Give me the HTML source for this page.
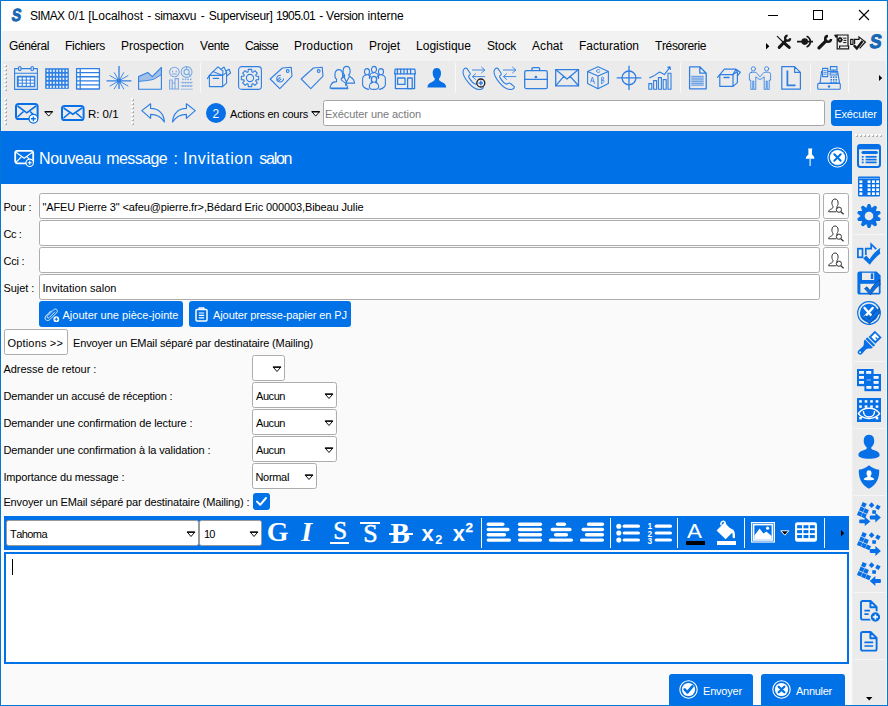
<!DOCTYPE html><html><head><meta charset="utf-8"><title>SIMAX</title><style>html,body{margin:0;padding:0}body{width:888px;height:706px;position:relative;overflow:hidden;background:#fafafa;font-family:'Liberation Sans',sans-serif;font-kerning:none}svg{overflow:visible;display:block}.in{position:absolute;box-sizing:border-box;background:#fff;border:1px solid #adadad;border-radius:2.5px}.bb{position:absolute;background:#0071e6;border-radius:3px}.sep{position:absolute;background:#fff;width:1px}.hs{position:absolute;background:#f6f6f6;height:1px;left:854px;width:31px}</style></head><body>
<div style="position:absolute;left:0px;top:0px;width:888px;height:31px;background:#fff"></div>
<div style="position:absolute;left:0px;top:31px;width:888px;height:30px;background:#f2f2f2"></div>
<div style="position:absolute;left:0px;top:61px;width:888px;height:70px;background:#ebebeb"></div>
<div style="position:absolute;left:1px;top:131px;width:851px;height:53px;background:#0071e6"></div>
<div style="position:absolute;left:852px;top:131px;width:34px;height:574px;background:#ebebeb"></div>
<div style="position:absolute;left:852px;top:131px;width:1px;height:574px;background:#efefef"></div>
<div style="position:absolute;left:886px;top:1px;width:1px;height:704px;background:#fbf6f0"></div>
<div style="position:absolute;left:1px;top:31px;width:1px;height:100px;background:#fbfbfb"></div>
<div style="position:absolute;left:1px;top:184px;width:1px;height:521px;background:#fff"></div>
<div style="position:absolute;left:0px;top:0px;width:888px;height:1px;background:#0078d7"></div>
<div style="position:absolute;left:0px;top:705px;width:888px;height:1px;background:#0078d7"></div>
<div style="position:absolute;left:0px;top:0px;width:1px;height:706px;background:#0078d7"></div>
<div style="position:absolute;left:887px;top:0px;width:1px;height:706px;background:#0078d7"></div>
<span style="position:absolute;left:10.2px;top:1.8px;font:bold 17.6px/26px 'Liberation Sans',sans-serif;-webkit-text-stroke:0.9px #1566b4;color:#1566b4;transform:skewX(-9deg) scaleX(0.8);transform-origin:0 100%">S</span><svg style="position:absolute;left:760px;top:5px" width="120" height="20" viewBox="0 0 120 20"><g fill="none" stroke="#000" stroke-width="1"><path d="M8 10.5 H18"/><rect x="53.5" y="5.5" width="9" height="9"/><path d="M99 5 L109 15 M109 5 L99 15" stroke-width="1.1"/></g></svg>
<svg style="position:absolute;left:766px;top:43px" width="4" height="7" viewBox="0 0 4 7"><path d="M0 0 L3.4 3.2 L0 6.4 Z" fill="#000"/></svg><svg style="position:absolute;left:777px;top:35px" width="14" height="14" viewBox="0 0 14 14"><g stroke="#161616" fill="none"><path d="M0.3 1.3 L6 7" stroke-width="1.1" stroke-linecap="round"/><path d="M7 7.8 L12.2 12.4" stroke-width="3.1" stroke-linecap="round"/><path d="M2.2 12.4 L8.6 5.8" stroke-width="3" stroke-linecap="round"/><path d="M13.1 3.2 A2.5 2.5 0 1 1 10.6 0.7" stroke-width="2.3"/></g></svg><svg style="position:absolute;left:797px;top:35px" width="17" height="14" viewBox="0 0 17 14"><circle cx="7.7" cy="6.6" r="3.3" fill="#161616"/><path d="M0 6.6 H5 M10.6 6.6 H16" stroke="#161616" stroke-width="1.7"/><path d="M9.6 1.2 A5.8 5.8 0 0 1 9.6 12" fill="none" stroke="#161616" stroke-width="1.7"/></svg><svg style="position:absolute;left:817px;top:35px" width="15" height="15" viewBox="0 0 15 15"><g stroke="#161616" fill="none"><path d="M2 12.8 L9 5.8" stroke-width="3.3" stroke-linecap="round"/><path d="M14 4 A2.9 2.9 0 1 1 11 1" stroke-width="2.5"/></g></svg><svg style="position:absolute;left:833.5px;top:34px" width="15" height="16" viewBox="0 0 15 16"><g fill="none" stroke="#161616" stroke-width="1.2"><path d="M3 1 H14 V12 M3.2 3.2 V14.8 H14.6 V12 H5.6 V14"/><path d="M0.6 1 H3.4 V3.2 H1.6 Z" fill="#161616" stroke-width="0.8"/><path d="M9.2 4.2 H12.4 M9.6 6.4 H12.4 M9.2 8.6 H12.4" stroke-width="1"/><circle cx="6" cy="5.8" r="1.6" stroke-width="1.7"/><path d="M6 2.8 V3.8 M6 7.8 V8.8 M3 5.8 H4 M8 5.8 H9 M3.9 3.7 L4.6 4.4 M7.4 7.2 L8.1 7.9 M8.1 3.7 L7.4 4.4 M4.6 7.2 L3.9 7.9" stroke-width="0.9"/></g></svg><svg style="position:absolute;left:850px;top:36px" width="16" height="14" viewBox="0 0 16 14"><g fill="none" stroke="#161616" stroke-width="1.2" stroke-linejoin="miter"><rect x="0.7" y="3.4" width="2.3" height="5"/><path d="M4.6 8 V3.4 H9 V0.9 L15.4 6 L9.6 12.4"/><path d="M3.8 9.2 L6.8 12.4 L12.6 5" stroke-width="2.4"/></g></svg><span style="position:absolute;left:868.2px;top:28.2px;font:bold 19.4px/26px 'Liberation Sans',sans-serif;-webkit-text-stroke:1px #1566b4;color:#1566b4;transform:skewX(-9deg) scaleX(0.9);transform-origin:0 100%">S</span>
<svg style="position:absolute;left:4px;top:64px" width="3" height="28" viewBox="0 0 3 28"><rect x="0" y="0" width="2" height="2" fill="#fff"/><path d="M3 0.8 V3 H1 Z" fill="#999"/><rect x="2" y="2" width="1" height="1" fill="#aaa"/><rect x="0" y="4" width="2" height="2" fill="#fff"/><path d="M3 4.8 V7 H1 Z" fill="#999"/><rect x="2" y="6" width="1" height="1" fill="#aaa"/><rect x="0" y="8" width="2" height="2" fill="#fff"/><path d="M3 8.8 V11 H1 Z" fill="#999"/><rect x="2" y="10" width="1" height="1" fill="#aaa"/><rect x="0" y="12" width="2" height="2" fill="#fff"/><path d="M3 12.8 V15 H1 Z" fill="#999"/><rect x="2" y="14" width="1" height="1" fill="#aaa"/><rect x="0" y="16" width="2" height="2" fill="#fff"/><path d="M3 16.8 V19 H1 Z" fill="#999"/><rect x="2" y="18" width="1" height="1" fill="#aaa"/><rect x="0" y="20" width="2" height="2" fill="#fff"/><path d="M3 20.8 V23 H1 Z" fill="#999"/><rect x="2" y="22" width="1" height="1" fill="#aaa"/><rect x="0" y="24" width="2" height="2" fill="#fff"/><path d="M3 24.8 V27 H1 Z" fill="#999"/><rect x="2" y="26" width="1" height="1" fill="#aaa"/></svg><div style="position:absolute;left:200px;top:63px;width:1px;height:30px;background:#f9f9f9"></div><div style="position:absolute;left:455px;top:63px;width:1px;height:30px;background:#f9f9f9"></div><div style="position:absolute;left:680px;top:63px;width:1px;height:30px;background:#f9f9f9"></div><div style="position:absolute;left:810px;top:63px;width:1px;height:30px;background:#f9f9f9"></div><div style="position:absolute;left:848px;top:63px;width:1px;height:30px;background:#f9f9f9"></div><svg style="position:absolute;left:14px;top:66px" width="24" height="24" viewBox="0 0 24 24"><g fill="none" stroke="#2f7fe3" stroke-width="1.1" stroke-linecap="round" stroke-linejoin="round" ><rect x="0.6" y="2.6" width="22.8" height="20.8"/><path d="M0.6 7.2 H23.4"/><rect x="3.4" y="10.4" width="17.4" height="10.4" fill="#2f7fe3"/><rect x="4.7" y="11.5" width="3" height="2.1" fill="#fff" stroke="none"/><rect x="4.7" y="14.6" width="3" height="2.1" fill="#fff" stroke="none"/><rect x="4.7" y="17.7" width="3" height="2.1" fill="#fff" stroke="none"/><rect x="8.75" y="11.5" width="3" height="2.1" fill="#fff" stroke="none"/><rect x="8.75" y="14.6" width="3" height="2.1" fill="#fff" stroke="none"/><rect x="8.75" y="17.7" width="3" height="2.1" fill="#fff" stroke="none"/><rect x="12.8" y="11.5" width="3" height="2.1" fill="#fff" stroke="none"/><rect x="12.8" y="14.6" width="3" height="2.1" fill="#fff" stroke="none"/><rect x="12.8" y="17.7" width="3" height="2.1" fill="#fff" stroke="none"/><rect x="16.85" y="11.5" width="3" height="2.1" fill="#fff" stroke="none"/><rect x="16.85" y="14.6" width="3" height="2.1" fill="#fff" stroke="none"/><rect x="16.85" y="17.7" width="3" height="2.1" fill="#fff" stroke="none"/><rect x="4.6" y="0.5" width="2.4" height="4.2" rx="1.2" fill="#ebebeb"/><rect x="17" y="0.5" width="2.4" height="4.2" rx="1.2" fill="#ebebeb"/></g></svg><svg style="position:absolute;left:45px;top:66px" width="24" height="24" viewBox="0 0 24 24"><rect x="0.2" y="2.2" width="23.6" height="20.6" fill="#2f7fe3"/><rect x="1.7" y="3.7" width="1.7" height="2.2" fill="#fff" fill-opacity="0.9"/><rect x="1.7" y="7.7" width="1.7" height="2.2" fill="#fff" fill-opacity="0.9"/><rect x="1.7" y="11.7" width="1.7" height="2.2" fill="#fff" fill-opacity="0.9"/><rect x="1.7" y="15.7" width="1.7" height="2.2" fill="#fff" fill-opacity="0.9"/><rect x="1.7" y="19.7" width="1.7" height="2.2" fill="#fff" fill-opacity="0.9"/><rect x="4.88" y="3.7" width="1.7" height="2.2" fill="#fff" fill-opacity="0.9"/><rect x="4.88" y="7.7" width="1.7" height="2.2" fill="#fff" fill-opacity="0.9"/><rect x="4.88" y="11.7" width="1.7" height="2.2" fill="#fff" fill-opacity="0.9"/><rect x="4.88" y="15.7" width="1.7" height="2.2" fill="#fff" fill-opacity="0.9"/><rect x="4.88" y="19.7" width="1.7" height="2.2" fill="#fff" fill-opacity="0.9"/><rect x="8.06" y="3.7" width="1.7" height="2.2" fill="#fff" fill-opacity="0.9"/><rect x="8.06" y="7.7" width="1.7" height="2.2" fill="#fff" fill-opacity="0.9"/><rect x="8.06" y="11.7" width="1.7" height="2.2" fill="#fff" fill-opacity="0.9"/><rect x="8.06" y="15.7" width="1.7" height="2.2" fill="#fff" fill-opacity="0.9"/><rect x="8.06" y="19.7" width="1.7" height="2.2" fill="#fff" fill-opacity="0.9"/><rect x="11.24" y="3.7" width="1.7" height="2.2" fill="#fff" fill-opacity="0.9"/><rect x="11.24" y="7.7" width="1.7" height="2.2" fill="#fff" fill-opacity="0.9"/><rect x="11.24" y="11.7" width="1.7" height="2.2" fill="#fff" fill-opacity="0.9"/><rect x="11.24" y="15.7" width="1.7" height="2.2" fill="#fff" fill-opacity="0.9"/><rect x="11.24" y="19.7" width="1.7" height="2.2" fill="#fff" fill-opacity="0.9"/><rect x="14.42" y="3.7" width="1.7" height="2.2" fill="#fff" fill-opacity="0.9"/><rect x="14.42" y="7.7" width="1.7" height="2.2" fill="#fff" fill-opacity="0.9"/><rect x="14.42" y="11.7" width="1.7" height="2.2" fill="#fff" fill-opacity="0.9"/><rect x="14.42" y="15.7" width="1.7" height="2.2" fill="#fff" fill-opacity="0.9"/><rect x="14.42" y="19.7" width="1.7" height="2.2" fill="#fff" fill-opacity="0.9"/><rect x="17.6" y="3.7" width="1.7" height="2.2" fill="#fff" fill-opacity="0.9"/><rect x="17.6" y="7.7" width="1.7" height="2.2" fill="#fff" fill-opacity="0.9"/><rect x="17.6" y="11.7" width="1.7" height="2.2" fill="#fff" fill-opacity="0.9"/><rect x="17.6" y="15.7" width="1.7" height="2.2" fill="#fff" fill-opacity="0.9"/><rect x="17.6" y="19.7" width="1.7" height="2.2" fill="#fff" fill-opacity="0.9"/><rect x="20.78" y="3.7" width="1.7" height="2.2" fill="#fff" fill-opacity="0.9"/><rect x="20.78" y="7.7" width="1.7" height="2.2" fill="#fff" fill-opacity="0.9"/><rect x="20.78" y="11.7" width="1.7" height="2.2" fill="#fff" fill-opacity="0.9"/><rect x="20.78" y="15.7" width="1.7" height="2.2" fill="#fff" fill-opacity="0.9"/><rect x="20.78" y="19.7" width="1.7" height="2.2" fill="#fff" fill-opacity="0.9"/></svg><svg style="position:absolute;left:76px;top:66px" width="24" height="24" viewBox="0 0 24 24"><g fill="none" stroke="#2f7fe3" stroke-width="1.3" stroke-linecap="round" stroke-linejoin="round" ><rect x="0.6" y="2.6" width="22.8" height="20.4" fill="#fff"/><path d="M0.6 6.68 H23.4"/><path d="M0.6 10.76 H23.4"/><path d="M0.6 14.84 H23.4"/><path d="M0.6 18.92 H23.4"/><path d="M4.2 2.6 V23"/></g></svg><svg style="position:absolute;left:107px;top:66px" width="24" height="24" viewBox="0 0 24 24"><g fill="none" stroke="#2f7fe3" stroke-width="1.1" stroke-linecap="round" stroke-linejoin="round" ><path d="M12 0.4 V22.4 M0 14.8 H24" stroke-width="1.3"/><g stroke-width="0.9"><path d="M12 14.8 L21.01 20.00"/><path d="M12 14.8 L16.70 22.94"/><path d="M12 14.8 L7.30 22.94"/><path d="M12 14.8 L2.99 20.00"/><path d="M12 14.8 L2.99 9.60"/><path d="M12 14.8 L7.30 6.66"/><path d="M12 14.8 L16.70 6.66"/><path d="M12 14.8 L21.01 9.60"/></g><circle cx="12" cy="14.8" r="1.7" fill="#2f7fe3"/></g></svg><svg style="position:absolute;left:138px;top:66px" width="24" height="24" viewBox="0 0 24 24"><g fill="none" stroke="#2f7fe3" stroke-width="1.1" stroke-linecap="round" stroke-linejoin="round" ><path d="M0.6 10.6 L9.8 6.4 L14.2 10.6 L23.4 1.4 V8.6 L15.6 13.4 L9 14.6 L0.6 15.4 Z" fill="#2f7fe3" fill-opacity="0.4" stroke="none"/><path d="M0.6 10.6 L9.8 6.4 L14.2 10.6 L23.4 1.4 V23.2 H0.6 Z"/><path d="M0.6 15.4 L9 14.6 L15.6 13.4 L23.4 8.6" stroke-width="0.9"/></g></svg><svg style="position:absolute;left:169px;top:66px" width="24" height="24" viewBox="0 0 24 24"><g fill="none" stroke="#2f7fe3" stroke-width="1.1" stroke-linecap="round" stroke-linejoin="round" opacity="0.6"><circle cx="5.4" cy="6" r="4.8"/><path d="M3.6 5 v1 M7.2 5 v1 M3.4 8 h4"/><circle cx="17.6" cy="6" r="5.4"/><circle cx="17.6" cy="6" r="2.6"/><path d="M17.6 0.6 V3.4 M19.6 7.8 L21.6 9.8"/><path d="M0.6 23 V14 H3.2 V23 M3.2 23 V17 H6 V23 M6 23 V12.6 H9.4 V23 M0.6 23 H9.8"/><path d="M12 23.2 H23.4 M12 19.8 H23.4 M12 16.4 H23.4" stroke-width="0.7"/><rect x="13.2" y="12.6" width="1.5" height="1.5" fill="#2f7fe3" stroke="none"/><rect x="13.2" y="16" width="1.5" height="1.5" fill="#2f7fe3" stroke="none"/><rect x="13.2" y="19.4" width="1.5" height="1.5" fill="#2f7fe3" stroke="none"/><rect x="15.8" y="12.6" width="1.5" height="1.5" fill="#2f7fe3" stroke="none"/><rect x="15.8" y="16" width="1.5" height="1.5" fill="#2f7fe3" stroke="none"/><rect x="15.8" y="19.4" width="1.5" height="1.5" fill="#2f7fe3" stroke="none"/><rect x="18.4" y="12.6" width="1.5" height="1.5" fill="#2f7fe3" stroke="none"/><rect x="18.4" y="16" width="1.5" height="1.5" fill="#2f7fe3" stroke="none"/><rect x="18.4" y="19.4" width="1.5" height="1.5" fill="#2f7fe3" stroke="none"/><rect x="21" y="12.6" width="1.5" height="1.5" fill="#2f7fe3" stroke="none"/><rect x="21" y="16" width="1.5" height="1.5" fill="#2f7fe3" stroke="none"/><rect x="21" y="19.4" width="1.5" height="1.5" fill="#2f7fe3" stroke="none"/></g></svg><svg style="position:absolute;left:207px;top:66px" width="24" height="24" viewBox="0 0 24 24"><g fill="none" stroke="#2f7fe3" stroke-width="1.1" stroke-linecap="round" stroke-linejoin="round" ><path d="M2.4 9.4 H15.6 V20.6 H2.4 Z"/><path d="M15.6 9.4 L19.6 6.4 V17.2 L15.6 20.6"/><path d="M2.4 9.4 L0.4 12.6 M2.4 9.4 L6 5.6 L15.6 9.4"/><path d="M6 5.6 L11 0.8 L16 5 L15.6 9.4 M14 3.4 L17 1 L19.6 6.4"/><path d="M19 5 L22 3.2 L23.6 7 L19.6 10"/><path d="M6.4 12.4 H11.4" stroke-width="1.4"/></g></svg><svg style="position:absolute;left:238px;top:66px" width="24" height="24" viewBox="0 0 24 24"><g fill="none" stroke="#2f7fe3" stroke-width="1.1" stroke-linecap="round" stroke-linejoin="round" ><rect x="0.6" y="0.6" width="22.8" height="22.8" rx="3.2"/><path d="M10.08 5.89 L10.30 3.37 L13.70 3.37 L13.92 5.89 L14.96 6.33 L16.90 4.69 L19.31 7.10 L17.67 9.04 L18.11 10.08 L20.63 10.30 L20.63 13.70 L18.11 13.92 L17.67 14.96 L19.31 16.90 L16.90 19.31 L14.96 17.67 L13.92 18.11 L13.70 20.63 L10.30 20.63 L10.08 18.11 L9.04 17.67 L7.10 19.31 L4.69 16.90 L6.33 14.96 L5.89 13.92 L3.37 13.70 L3.37 10.30 L5.89 10.08 L6.33 9.04 L4.69 7.10 L7.10 4.69 L9.04 6.33 Z"/><circle cx="12" cy="12" r="3.6"/></g></svg><svg style="position:absolute;left:269px;top:66px" width="24" height="24" viewBox="0 0 24 24"><g fill="none" stroke="#2f7fe3" stroke-width="1.1" stroke-linecap="round" stroke-linejoin="round" ><path d="M1.2 13 L13.4 2 L22.2 1.2 L23 10.2 L10.8 22.6 Z"/><circle cx="18.7" cy="5" r="1.4"/><g transform="rotate(-40 11 12.6)"><path d="M13.6 10.4 A3.4 3.4 0 1 0 13.6 15 M7.4 11.8 H11.8 M7.4 13.6 H11.4" stroke-width="1"/></g></g></svg><svg style="position:absolute;left:300px;top:66px" width="24" height="24" viewBox="0 0 24 24"><g fill="none" stroke="#2f7fe3" stroke-width="1.1" stroke-linecap="round" stroke-linejoin="round" ><path d="M1.2 13 L13.4 2 L22.2 1.2 L23 10.2 L10.8 22.6 Z"/><circle cx="18.7" cy="5" r="1.4"/></g></svg><svg style="position:absolute;left:331px;top:66px" width="24" height="24" viewBox="0 0 24 24"><g fill="none" stroke="#2f7fe3" stroke-width="1.1" stroke-linecap="round" stroke-linejoin="round" ><path d="M13.53 9.05 C11.28 7.45 11.46 0.40 15.60 0.40 C19.74 0.40 19.92 7.45 17.67 9.05 C17.67 11.30 23.12 11.12 23.50 16.85 L23.50 17.13 L7.70 17.13 C7.70 16.85 8.08 11.12 13.53 11.30 C13.53 10.74 13.53 9.80 13.53 9.05 Z"/><path d="M5.51 13.17 C3.02 11.40 3.22 3.60 7.80 3.60 C12.38 3.60 12.58 11.40 10.09 13.17 C10.09 15.66 16.12 15.46 16.54 21.80 L16.54 22.11 L-0.94 22.11 C-0.94 21.80 -0.52 15.46 5.51 15.66 C5.51 15.04 5.51 14.00 5.51 13.17 Z" fill="#ebebeb"/><path d="M0.4 22.6 H16.8" stroke-width="1.3"/><path d="M12.4 9.6 L15.4 16 L14.6 19.4 M18.6 10.2 L15.4 16"/></g></svg><svg style="position:absolute;left:362px;top:66px" width="24" height="24" viewBox="0 0 24 24"><g fill="none" stroke="#2f7fe3" stroke-width="1.1" stroke-linecap="round" stroke-linejoin="round" ><ellipse cx="12" cy="3.5" rx="2.5" ry="3.1"/><path d="M10.8 6.8 C7.4 7.8 7.4 9.4 7.4 12.4 V11.4"/><path d="M13.2 6.8 C16.6 7.8 16.6 9.4 16.6 12.4 V11.4"/><ellipse cx="5" cy="5.7" rx="2.5" ry="3.1"/><path d="M3.8 9 C0.6 10 0.6 11.6 0.6 14.6 V18.6"/><path d="M6.2 9 C9.4 10 9.4 11.6 9.4 14.6 V18.6"/><ellipse cx="19" cy="5.7" rx="2.5" ry="3.1"/><path d="M17.8 9 C14.6 10 14.6 11.6 14.6 14.6 V18.6"/><path d="M20.2 9 C23.4 10 23.4 11.6 23.4 14.6 V18.6"/><path d="M0.6 18.6 C1 21.6 3.4 22.6 6.6 23.4 M23.4 18.6 C23 21.6 20.6 22.6 17.4 23.4"/><ellipse cx="12" cy="13.4" rx="2.5" ry="3" fill="#ebebeb"/><path d="M10.8 16.4 C7.4 17.4 7.4 19 7.4 21 C7.4 22.4 9.4 23.4 12 23.4 C14.6 23.4 16.6 22.4 16.6 21 C16.6 19 16.6 17.4 13.2 16.4" fill="#ebebeb"/></g></svg><svg style="position:absolute;left:393px;top:66px" width="24" height="24" viewBox="0 0 24 24"><g fill="none" stroke="#2f7fe3" stroke-width="1.3" stroke-linecap="round" stroke-linejoin="round" ><path d="M2.2 3.2 H21.8 L22.4 7.8 H1.6 Z"/><path d="M4.4 3.2 V7.8"/><path d="M7.7 3.2 V7.8"/><path d="M11 3.2 V7.8"/><path d="M14.3 3.2 V7.8"/><path d="M17.6 3.2 V7.8"/><path d="M2.4 7.8 V22.6 H21.6 V7.8"/><rect x="4.6" y="12" width="7.4" height="6.4"/><rect x="14.6" y="12" width="4.6" height="10.6"/></g></svg><svg style="position:absolute;left:424px;top:66px" width="24" height="24" viewBox="0 0 24 24"><path d="M12.8 2 C9.4 2 8.4 5 8.8 8 C9 10.4 10.2 12 10.8 12.6 C11 14.4 10 15.2 7.6 16.2 C5 17.2 3.4 18.6 3.4 21.6 H22.2 C22.2 18.6 20.6 17.2 18 16.2 C15.6 15.2 14.8 14.4 15 12.6 C15.8 12 16.8 10.2 17 8 C17.2 5 16.2 2 12.8 2 Z" fill="#0870e6"/></svg><svg style="position:absolute;left:462px;top:66px" width="24" height="24" viewBox="0 0 24 24"><g fill="none" stroke="#2f7fe3" stroke-width="1.1" stroke-linecap="round" stroke-linejoin="round" ><path d="M1.2 4.6 C2 2.4 4 1.4 5 2.6 L8 7 C8.6 8 8 9 7 9.6 C6.4 10 6.6 11 7.6 12.6 C9.4 15.4 11.6 17.4 13 18 C14 18.4 14.6 17.6 15.4 17.2 C16.2 16.8 17 17 17.8 17.8 L21 20.4 C22 21.4 20.6 23 18.6 23.4 C15 24 10 21 6.4 16.6 C2.6 12 0.4 7.4 1.2 4.6 Z"/><g stroke-width="0.9"><path d="M10.4 4 H22.6 M19.6 1.2 L22.8 4 L19.6 6.8"/><path d="M10.6 10.6 H22.8 M13.6 7.8 L10.4 10.6 L13.6 13.4"/></g></g><circle cx="18.8" cy="17" r="4" fill="#ebebeb" stroke="#222" stroke-width="1.3"/><path d="M16.6 17 H21 M18.8 14.8 V19.2" stroke="#2f7fe3" stroke-width="1.5"/></svg><svg style="position:absolute;left:493px;top:66px" width="24" height="24" viewBox="0 0 24 24"><g fill="none" stroke="#2f7fe3" stroke-width="1.1" stroke-linecap="round" stroke-linejoin="round" ><path d="M1.2 4.6 C2 2.4 4 1.4 5 2.6 L8 7 C8.6 8 8 9 7 9.6 C6.4 10 6.6 11 7.6 12.6 C9.4 15.4 11.6 17.4 13 18 C14 18.4 14.6 17.6 15.4 17.2 C16.2 16.8 17 17 17.8 17.8 L21 20.4 C22 21.4 20.6 23 18.6 23.4 C15 24 10 21 6.4 16.6 C2.6 12 0.4 7.4 1.2 4.6 Z"/><g stroke-width="0.9"><path d="M10.4 4 H22.6 M19.6 1.2 L22.8 4 L19.6 6.8"/><path d="M10.6 10.6 H22.8 M13.6 7.8 L10.4 10.6 L13.6 13.4"/></g></g></svg><svg style="position:absolute;left:524px;top:66px" width="24" height="24" viewBox="0 0 24 24"><g fill="none" stroke="#2f7fe3" stroke-width="1.3" stroke-linecap="round" stroke-linejoin="round" ><rect x="0.7" y="4.6" width="22.6" height="18" rx="1.6"/><path d="M0.7 13.4 H23.3"/><path d="M8 4.6 V2.6 Q8 1.6 9 1.6 H14.6 Q15.6 1.6 15.6 2.6 V4.6"/><circle cx="11.9" cy="11" r="0.7" fill="#2f7fe3"/></g></svg><svg style="position:absolute;left:555px;top:66px" width="24" height="24" viewBox="0 0 24 24"><g fill="none" stroke="#2f7fe3" stroke-width="1.3" stroke-linecap="round" stroke-linejoin="round" ><rect x="0.7" y="3.6" width="22.8" height="16.2"/><path d="M0.7 3.6 L12 13 L23.5 3.6 M0.7 19.8 L8.8 10.4 M23.5 19.8 L15.2 10.4"/></g></svg><svg style="position:absolute;left:586px;top:66px" width="24" height="24" viewBox="0 0 24 24"><g fill="none" stroke="#2f7fe3" stroke-width="1.1" stroke-linecap="round" stroke-linejoin="round" ><path d="M12 0.8 L22.4 5.4 V17.4 L12 22.8 L1.6 17.4 V5.4 Z M1.6 5.4 L12 10 L22.4 5.4 M12 10 V22.8"/><path d="M13.8 4 a2 1.4 0 1 0 0 2" stroke-width="0.8"/><path d="M4.8 16 L6.4 11 L8.6 17.6 M5.4 14.6 L7.6 15.6" stroke-width="0.8"/><path d="M15.6 17.6 V11.6 C18.4 10 18.4 13.4 15.8 14.4 C19 13.2 18.8 16.6 15.6 17.6" stroke-width="0.8"/></g></svg><svg style="position:absolute;left:617px;top:66px" width="24" height="24" viewBox="0 0 24 24"><g fill="none" stroke="#2f7fe3" stroke-width="1.3" stroke-linecap="round" stroke-linejoin="round" ><circle cx="12" cy="11.9" r="6.9"/><path d="M12 0.2 V23.6 M0.2 11.9 H23.8"/></g></svg><svg style="position:absolute;left:648px;top:66px" width="24" height="24" viewBox="0 0 24 24"><g fill="none" stroke="#2f7fe3" stroke-width="1.1" stroke-linecap="round" stroke-linejoin="round" ><rect x="0.8" y="17.6" width="3" height="5.6"/><rect x="5.6" y="14.6" width="3" height="8.6"/><rect x="10.4" y="11.6" width="3" height="11.6"/><rect x="15.2" y="13.6" width="3" height="9.6"/><rect x="20" y="7.2" width="3" height="16"/><path d="M1.6 11.8 L6.6 9.4 L11.6 6 L16.4 8.6 L21.6 1.6"/><path d="M19.6 1.2 L22 0.8 L22.4 3.4" fill="#2f7fe3"/></g></svg><svg style="position:absolute;left:686px;top:66px" width="24" height="24" viewBox="0 0 24 24"><g fill="none" stroke="#2f7fe3" stroke-width="1.1" stroke-linecap="round" stroke-linejoin="round" ><path d="M3.6 0.8 H13.8 L20.2 7.2 V22.8 H3.6 Z M13.8 0.8 V7.2 H20.2" stroke-width="1.3"/><rect x="5.4" y="9.6" width="12.2" height="10.6" fill="#2f7fe3" fill-opacity="0.15" stroke="none"/><g stroke-width="0.7"><path d="M5.6 10.4 H17.4"/><path d="M5.6 12.15 H17.4"/><path d="M5.6 13.9 H17.4"/><path d="M5.6 15.65 H17.4"/><path d="M5.6 17.4 H17.4"/><path d="M5.6 19.15 H17.4"/></g></g></svg><svg style="position:absolute;left:717px;top:66px" width="24" height="24" viewBox="0 0 24 24"><g fill="none" stroke="#2f7fe3" stroke-width="1.2" stroke-linecap="round" stroke-linejoin="round" ><path d="M2.8 8.6 H16 V20.4 H2.8 Z"/><path d="M16 8.6 L20.4 5.6 V16.6 L16 20.4"/><path d="M2.8 8.6 L0.6 11.4 M2.8 8.6 L7.4 3.2 H19 L16 8.6 M19 3.2 L23.4 6.2 L20.4 9.8"/><path d="M7 11.6 H12" stroke-width="1.5"/></g></svg><svg style="position:absolute;left:748px;top:66px" width="24" height="24" viewBox="0 0 24 24"><g fill="none" stroke="#2f7fe3" stroke-width="0.85" stroke-linecap="round" stroke-linejoin="round" ><circle cx="5.4" cy="2.8" r="2.1"/><circle cx="18.6" cy="2.8" r="2.1"/><path d="M3.6 6.2 H7 Q8.4 6.2 9.2 7.6 L11.6 10.6 H12.4 L14.8 7.6 Q15.6 6.2 17 6.2 H20.4 Q22.6 6.2 22.6 8.4 V14.2 H21.2 V23.4 H19.2 V15 H18.2 V23.4 H16.2 V10.8 L13 13.2 H11 L7.8 10.8 V23.4 H5.8 V15 H4.8 V23.4 H2.8 V14.2 H1.4 V8.4 Q1.4 6.2 3.6 6.2 Z"/></g></svg><svg style="position:absolute;left:779px;top:66px" width="24" height="24" viewBox="0 0 24 24"><g fill="none" stroke="#2f7fe3" stroke-width="1.1" stroke-linecap="round" stroke-linejoin="round" ><path d="M2.8 0.6 H15.6 L21.4 6.4 V23.2 H2.8 Z M15.6 0.6 V6.4 H21.4" stroke-width="1.2"/><path d="M8.4 4.6 V19.4 H16.6" stroke-width="1.8" stroke-linecap="butt" stroke-linejoin="miter"/></g></svg><svg style="position:absolute;left:817px;top:66px" width="24" height="24" viewBox="0 0 24 24"><g fill="none" stroke="#2f7fe3" stroke-width="1.1" stroke-linecap="round" stroke-linejoin="round" ><path d="M3 17.4 L4.6 5.4 H20.6 L22.6 17.4 Z"/><rect x="0.7" y="17.4" width="22.6" height="5.8" rx="1"/><rect x="13.4" y="0.6" width="6.6" height="3.4"/><path d="M16.6 4 V5.4"/><rect x="5.6" y="2.4" width="5.2" height="8.2" fill="#ebebeb"/><path d="M7 4.6 H9.4 M7 6.4 H9.4 M7 8.2 H9.4" stroke-width="0.8"/><rect x="13.2" y="6.8" width="6.8" height="2.2"/><rect x="13.4" y="10.4" width="1.6" height="1.6" fill="#2f7fe3" stroke="none"/><rect x="13.4" y="13" width="1.6" height="1.6" fill="#2f7fe3" stroke="none"/><rect x="13.4" y="15.6" width="1.6" height="1.6" fill="#2f7fe3" stroke="none"/><rect x="15.9" y="10.4" width="1.6" height="1.6" fill="#2f7fe3" stroke="none"/><rect x="15.9" y="13" width="1.6" height="1.6" fill="#2f7fe3" stroke="none"/><rect x="15.9" y="15.6" width="1.6" height="1.6" fill="#2f7fe3" stroke="none"/><rect x="18.4" y="10.4" width="1.6" height="1.6" fill="#2f7fe3" stroke="none"/><rect x="18.4" y="13" width="1.6" height="1.6" fill="#2f7fe3" stroke="none"/><rect x="18.4" y="15.6" width="1.6" height="1.6" fill="#2f7fe3" stroke="none"/><circle cx="12" cy="20.4" r="0.7" fill="#2f7fe3"/></g></svg><svg style="position:absolute;left:878.5px;top:75px" width="4" height="7" viewBox="0 0 4 7"><path d="M0 0 L3.2 3 L0 6 Z" fill="#000"/></svg>
<svg style="position:absolute;left:4px;top:98px" width="3" height="28" viewBox="0 0 3 28"><rect x="0" y="0" width="2" height="2" fill="#fff"/><path d="M3 0.8 V3 H1 Z" fill="#999"/><rect x="2" y="2" width="1" height="1" fill="#aaa"/><rect x="0" y="4" width="2" height="2" fill="#fff"/><path d="M3 4.8 V7 H1 Z" fill="#999"/><rect x="2" y="6" width="1" height="1" fill="#aaa"/><rect x="0" y="8" width="2" height="2" fill="#fff"/><path d="M3 8.8 V11 H1 Z" fill="#999"/><rect x="2" y="10" width="1" height="1" fill="#aaa"/><rect x="0" y="12" width="2" height="2" fill="#fff"/><path d="M3 12.8 V15 H1 Z" fill="#999"/><rect x="2" y="14" width="1" height="1" fill="#aaa"/><rect x="0" y="16" width="2" height="2" fill="#fff"/><path d="M3 16.8 V19 H1 Z" fill="#999"/><rect x="2" y="18" width="1" height="1" fill="#aaa"/><rect x="0" y="20" width="2" height="2" fill="#fff"/><path d="M3 20.8 V23 H1 Z" fill="#999"/><rect x="2" y="22" width="1" height="1" fill="#aaa"/><rect x="0" y="24" width="2" height="2" fill="#fff"/><path d="M3 24.8 V27 H1 Z" fill="#999"/><rect x="2" y="26" width="1" height="1" fill="#aaa"/></svg><svg style="position:absolute;left:131px;top:98px" width="3" height="28" viewBox="0 0 3 28"><rect x="0" y="0" width="2" height="2" fill="#fff"/><path d="M3 0.8 V3 H1 Z" fill="#999"/><rect x="2" y="2" width="1" height="1" fill="#aaa"/><rect x="0" y="4" width="2" height="2" fill="#fff"/><path d="M3 4.8 V7 H1 Z" fill="#999"/><rect x="2" y="6" width="1" height="1" fill="#aaa"/><rect x="0" y="8" width="2" height="2" fill="#fff"/><path d="M3 8.8 V11 H1 Z" fill="#999"/><rect x="2" y="10" width="1" height="1" fill="#aaa"/><rect x="0" y="12" width="2" height="2" fill="#fff"/><path d="M3 12.8 V15 H1 Z" fill="#999"/><rect x="2" y="14" width="1" height="1" fill="#aaa"/><rect x="0" y="16" width="2" height="2" fill="#fff"/><path d="M3 16.8 V19 H1 Z" fill="#999"/><rect x="2" y="18" width="1" height="1" fill="#aaa"/><rect x="0" y="20" width="2" height="2" fill="#fff"/><path d="M3 20.8 V23 H1 Z" fill="#999"/><rect x="2" y="22" width="1" height="1" fill="#aaa"/><rect x="0" y="24" width="2" height="2" fill="#fff"/><path d="M3 24.8 V27 H1 Z" fill="#999"/><rect x="2" y="26" width="1" height="1" fill="#aaa"/></svg><svg style="position:absolute;left:15px;top:103px" width="24" height="21" viewBox="0 0 24 21"><rect x="1" y="1" width="21.6" height="15" rx="2.6" fill="none" stroke="#0870e6" stroke-width="2"/><path d="M2.6 3 L11.8 9.86 L21 3" fill="none" stroke="#0870e6" stroke-width="1.6"/><path d="M2.6 14 L8.496 8.5 M21 14 L15.104 8.5" fill="none" stroke="#0870e6" stroke-width="1.6"/><circle cx="18.4" cy="15.8" r="4.4" fill="#fff" stroke="#0870e6" stroke-width="1.3"/><path d="M16 15.8 H20.8 M18.4 13.4 V18.2" stroke="#0870e6" stroke-width="1.4"/></svg><svg style="position:absolute;left:44px;top:110.8px" width="10" height="7" viewBox="0 0 10 7"><path d="M1 0.8 H8.4 L4.7 5.1 Z" fill="#fff" stroke="#111" stroke-width="1"/><path d="M0.6 0.7 H8.8" stroke="#000" stroke-width="1.3"/></svg><svg style="position:absolute;left:61px;top:105px" width="24" height="16" viewBox="0 0 24 16"><rect x="1" y="1" width="21.6" height="14" rx="2.6" fill="none" stroke="#0870e6" stroke-width="2"/><path d="M2.6 3 L11.8 9.28 L21 3" fill="none" stroke="#0870e6" stroke-width="1.6"/><path d="M2.6 13 L8.496 8 M21 13 L15.104 8" fill="none" stroke="#0870e6" stroke-width="1.6"/></svg><svg style="position:absolute;left:141px;top:103px" width="24" height="20" viewBox="0 0 24 20"><g fill="none" stroke="#2f7fe3" stroke-width="1.2" stroke-linecap="round" stroke-linejoin="round" ><path d="M0.8 7.6 L9.6 0.8 V5.4 C17 5.4 23 10 23.4 19 C20 13.6 15.6 11.4 9.6 11.4 V15.4 Z"/></g></svg><svg style="position:absolute;left:172px;top:103px" width="24" height="20" viewBox="0 0 24 20"><g fill="none" stroke="#2f7fe3" stroke-width="1.2" stroke-linecap="round" stroke-linejoin="round" ><path d="M0.8 7.6 L9.6 0.8 V5.4 C17 5.4 23 10 23.4 19 C20 13.6 15.6 11.4 9.6 11.4 V15.4 Z" transform="translate(24 0) scale(-1 1)"/></g></svg><div style="position:absolute;left:206px;top:103px;width:20px;height:20px;border-radius:50%;background:#0870e6"></div><svg style="position:absolute;left:310.6px;top:110.9px" width="10" height="7" viewBox="0 0 10 7"><path d="M1 0.8 H8.4 L4.7 5.1 Z" fill="#fff" stroke="#111" stroke-width="1"/><path d="M0.6 0.7 H8.8" stroke="#000" stroke-width="1.3"/></svg>
<div class="in" style="left:323px;top:100px;width:502px;height:26px;border-color:#a6a6a6"></div>
<div class="bb" style="left:831px;top:100px;width:51px;height:26px;border-radius:4px"></div>
<svg style="position:absolute;left:14px;top:150px" width="21" height="17" viewBox="0 0 21 17"><rect x="1.2" y="0.9" width="18" height="12.4" rx="2" fill="none" stroke="#fff" stroke-width="1.8"/><path d="M2 2.2 L10.2 8.2 L18.4 2.2 M2.2 12 L7.6 6.6 M18 11.6 L12.8 6.6" fill="none" stroke="#fff" stroke-width="1.1"/><circle cx="15.7" cy="12.8" r="3.7" fill="#0071e6" stroke="#fff" stroke-width="1.1"/><path d="M13.7 12.8 H17.7 M15.7 10.8 V14.8" stroke="#fff" stroke-width="1.1"/></svg><svg style="position:absolute;left:805px;top:147.6px" width="10" height="19" viewBox="0 0 10 19"><path d="M3 0.4 H7.4 L7 2 V6.4 C8.6 7.6 9.4 9 9.4 10.8 H0.8 C0.8 9 1.8 7.6 3.4 6.4 V2 Z" fill="#fff"/><path d="M5.1 10.8 V18" stroke="#fff" stroke-width="1.1"/></svg><svg style="position:absolute;left:826.5px;top:146.5px" width="21" height="21" viewBox="0 0 21 21"><circle cx="10.5" cy="10.5" r="9.6" fill="none" stroke="#fff" stroke-width="1"/><circle cx="10.5" cy="10.5" r="7.6" fill="#fff"/><path d="M7.3 7.3 L13.7 13.7 M13.7 7.3 L7.3 13.7" stroke="#0071e6" stroke-width="2" stroke-linecap="round"/></svg>
<div class="in" style="left:39px;top:193px;width:781px;height:26px"></div>
<div class="in" style="left:39px;top:220px;width:781px;height:26px"></div>
<div class="in" style="left:39px;top:247px;width:781px;height:26px"></div>
<div class="in" style="left:39px;top:274px;width:781px;height:26px"></div>
<div class="in" style="left:823px;top:193px;width:26px;height:26px"></div>
<svg style="position:absolute;left:828px;top:198px" width="18" height="18" viewBox="0 0 18 18"><g fill="none" stroke="#333" stroke-width="1"><path d="M5 8.2 C3.2 6.6 3.4 1 7 1 C10.6 1 10.8 6.6 9 8.2 C9 10 9.2 10.2 10 10.6 M5 8.2 C5 10 4.6 10.6 2.4 11.4 C1.2 11.9 0.8 12.8 0.6 13.8 H8.4"/><circle cx="10.9" cy="11.7" r="2.6"/><path d="M12.8 13.8 L15.6 16.2" stroke-width="1.3"/></g></svg>
<div class="in" style="left:823px;top:220px;width:26px;height:26px"></div>
<svg style="position:absolute;left:828px;top:225px" width="18" height="18" viewBox="0 0 18 18"><g fill="none" stroke="#333" stroke-width="1"><path d="M5 8.2 C3.2 6.6 3.4 1 7 1 C10.6 1 10.8 6.6 9 8.2 C9 10 9.2 10.2 10 10.6 M5 8.2 C5 10 4.6 10.6 2.4 11.4 C1.2 11.9 0.8 12.8 0.6 13.8 H8.4"/><circle cx="10.9" cy="11.7" r="2.6"/><path d="M12.8 13.8 L15.6 16.2" stroke-width="1.3"/></g></svg>
<div class="in" style="left:823px;top:247px;width:26px;height:26px"></div>
<svg style="position:absolute;left:828px;top:252px" width="18" height="18" viewBox="0 0 18 18"><g fill="none" stroke="#333" stroke-width="1"><path d="M5 8.2 C3.2 6.6 3.4 1 7 1 C10.6 1 10.8 6.6 9 8.2 C9 10 9.2 10.2 10 10.6 M5 8.2 C5 10 4.6 10.6 2.4 11.4 C1.2 11.9 0.8 12.8 0.6 13.8 H8.4"/><circle cx="10.9" cy="11.7" r="2.6"/><path d="M12.8 13.8 L15.6 16.2" stroke-width="1.3"/></g></svg>
<div class="bb" style="left:39px;top:301px;width:144px;height:26px"></div>
<div class="bb" style="left:189px;top:301px;width:162px;height:26px"></div>
<svg style="position:absolute;left:44px;top:307.5px" width="16" height="15" viewBox="0 0 16 15"><g fill="none" stroke="#fff" stroke-width="0.95" stroke-linecap="round" opacity="0.92"><path d="M10.8 4 L5.2 9.6 C4 10.8 2.2 9.2 3.6 7.8 L9.6 1.8 C11.8 -0.4 14.8 2.6 12.6 4.8 L5.8 11.6 C3 14.4 -0.8 10.6 2 7.8 L6.8 3"/></g><circle cx="12.3" cy="11.2" r="2.9" fill="#fff"/><path d="M10.7 11.2 H13.9 M12.3 9.6 V12.8" stroke="#0071e6" stroke-width="1.1"/></svg><svg style="position:absolute;left:194.5px;top:307px" width="13" height="15" viewBox="0 0 13 15"><g fill="none" stroke="#fff" stroke-width="1.5" stroke-linejoin="round"><rect x="1" y="2.4" width="11" height="11.6" rx="1.2"/><path d="M4.2 2.6 V1 H8.8 V2.6" stroke-width="1.6"/><path d="M3.8 6 H9.2 M3.8 8.4 H9.2 M3.8 10.8 H9.2" stroke-width="1.2"/></g></svg>
<div class="in" style="left:4px;top:329px;width:64px;height:26px"></div>
<div class="in" style="left:252px;top:355px;width:33px;height:26px"></div>
<svg style="position:absolute;left:272px;top:365.8px" width="10" height="8" viewBox="0 0 10 8"><path d="M1.3 1.2 H8.7 L5 5.5 Z" fill="#fff" stroke="#111" stroke-width="1" stroke-linejoin="miter"/><path d="M0.9 1.1 H9.1" stroke="#000" stroke-width="1.3"/></svg>
<div class="in" style="left:252px;top:382px;width:85px;height:26px"></div>
<svg style="position:absolute;left:324px;top:392.8px" width="10" height="8" viewBox="0 0 10 8"><path d="M1.3 1.2 H8.7 L5 5.5 Z" fill="#fff" stroke="#111" stroke-width="1" stroke-linejoin="miter"/><path d="M0.9 1.1 H9.1" stroke="#000" stroke-width="1.3"/></svg>
<div class="in" style="left:252px;top:409px;width:85px;height:26px"></div>
<svg style="position:absolute;left:324px;top:419.8px" width="10" height="8" viewBox="0 0 10 8"><path d="M1.3 1.2 H8.7 L5 5.5 Z" fill="#fff" stroke="#111" stroke-width="1" stroke-linejoin="miter"/><path d="M0.9 1.1 H9.1" stroke="#000" stroke-width="1.3"/></svg>
<div class="in" style="left:252px;top:436px;width:85px;height:26px"></div>
<svg style="position:absolute;left:324px;top:446.8px" width="10" height="8" viewBox="0 0 10 8"><path d="M1.3 1.2 H8.7 L5 5.5 Z" fill="#fff" stroke="#111" stroke-width="1" stroke-linejoin="miter"/><path d="M0.9 1.1 H9.1" stroke="#000" stroke-width="1.3"/></svg>
<div class="in" style="left:252px;top:463px;width:65px;height:26px"></div>
<svg style="position:absolute;left:304px;top:473.8px" width="10" height="8" viewBox="0 0 10 8"><path d="M1.3 1.2 H8.7 L5 5.5 Z" fill="#fff" stroke="#111" stroke-width="1" stroke-linejoin="miter"/><path d="M0.9 1.1 H9.1" stroke="#000" stroke-width="1.3"/></svg>
<div class="bb" style="left:253px;top:493px;width:17px;height:17px;border-radius:3px"></div>
<svg style="position:absolute;left:253px;top:493px" width="17" height="17" viewBox="0 0 17 17"><path d="M4 8.6 L7.2 11.8 L13 5" fill="none" stroke="#fff" stroke-width="2" stroke-linecap="round" stroke-linejoin="round"/></svg>
<div style="position:absolute;left:4px;top:516px;width:845px;height:34px;background:#0071e6"></div>
<div class="in" style="left:6px;top:520px;width:193px;height:26px;border-color:#9a9a9a"></div>
<div class="in" style="left:199px;top:520px;width:63px;height:26px;border-color:#9a9a9a"></div>
<svg style="position:absolute;left:186px;top:530.8px" width="10" height="8" viewBox="0 0 10 8"><path d="M1.3 1.2 H8.7 L5 5.5 Z" fill="#fff" stroke="#111" stroke-width="1" stroke-linejoin="miter"/><path d="M0.9 1.1 H9.1" stroke="#000" stroke-width="1.3"/></svg>
<svg style="position:absolute;left:249px;top:530.8px" width="10" height="8" viewBox="0 0 10 8"><path d="M1.3 1.2 H8.7 L5 5.5 Z" fill="#fff" stroke="#111" stroke-width="1" stroke-linejoin="miter"/><path d="M0.9 1.1 H9.1" stroke="#000" stroke-width="1.3"/></svg>
<span style="position:absolute;left:266.8px;top:516.55px;line-height:30px;font:bold 28px/30px 'Liberation Serif',serif;color:#fff;">G</span><span style="position:absolute;left:301.2px;top:516.95px;line-height:30px;font:italic bold 28px/30px 'Liberation Serif',serif;color:#fff;">I</span><span style="position:absolute;left:333.2px;top:515.56px;line-height:30px;font:normal 25px/30px 'Liberation Serif',serif;color:#fff;-webkit-text-stroke:0.5px #fff;">S</span><div style="position:absolute;left:330px;top:542px;width:19px;height:2px;background:#fff"></div><span style="position:absolute;left:363.2px;top:519.23px;line-height:30px;font:normal 26px/30px 'Liberation Serif',serif;color:#fff;-webkit-text-stroke:0.5px #fff;">S</span><div style="position:absolute;left:360px;top:521.5px;width:20px;height:2px;background:#fff"></div><span style="position:absolute;left:390.6px;top:517.61px;line-height:30px;font:bold 29px/30px 'Liberation Serif',serif;color:#fff;">B</span><div style="position:absolute;left:389px;top:532.5px;width:24px;height:2px;background:#fff"></div><span style="position:absolute;left:421.4px;top:521.6px;font:bold 22px/24px 'Liberation Sans',sans-serif;color:#fff">x</span><span style="position:absolute;left:435.2px;top:532.3px;font:bold 12.8px/16px 'Liberation Sans',sans-serif;color:#fff">2</span><span style="position:absolute;left:452.8px;top:521.6px;font:bold 22px/24px 'Liberation Sans',sans-serif;color:#fff">x</span><span style="position:absolute;left:465.4px;top:520px;font:bold 13.5px/16px 'Liberation Sans',sans-serif;color:#fff;-webkit-text-stroke:0.3px #fff">2</span><div class="sep" style="left:481px;top:518px;height:30px"></div><div class="sep" style="left:610px;top:518px;height:30px"></div><div class="sep" style="left:677px;top:518px;height:30px"></div><div class="sep" style="left:744px;top:518px;height:30px"></div><div class="sep" style="left:824px;top:518px;height:30px"></div><svg style="position:absolute;left:486px;top:520px" width="26" height="26" viewBox="0 0 26 26"><g stroke="#fff" stroke-width="3.4" stroke-linecap="round"><path d="M2.3 4.2 H16.8"/><path d="M2.3 9.5 H21.8"/><path d="M2.3 14.8 H18.4"/><path d="M2.3 20.1 H23.4"/></g></svg><svg style="position:absolute;left:517px;top:520px" width="26" height="26" viewBox="0 0 26 26"><g stroke="#fff" stroke-width="3.4" stroke-linecap="round"><path d="M2.6 4.2 H23.4"/><path d="M2.6 9.5 H23.4"/><path d="M2.6 14.8 H23.4"/><path d="M2.6 20.1 H23.4"/></g></svg><svg style="position:absolute;left:548px;top:520px" width="26" height="26" viewBox="0 0 26 26"><g stroke="#fff" stroke-width="3.4" stroke-linecap="round"><path d="M9.6 4.2 H16.4"/><path d="M4.3 9.5 H21.9"/><path d="M7.6 14.8 H18.4"/><path d="M2.4 20.1 H23.4"/></g></svg><svg style="position:absolute;left:579px;top:520px" width="26" height="26" viewBox="0 0 26 26"><g stroke="#fff" stroke-width="3.4" stroke-linecap="round"><path d="M9.6 4.2 H23.4"/><path d="M4.2 9.5 H23.4"/><path d="M7.6 14.8 H23.4"/><path d="M2.6 20.1 H23.4"/></g></svg><svg style="position:absolute;left:616px;top:520px" width="26" height="26" viewBox="0 0 26 26"><circle cx="2.8" cy="6.2" r="2.55" fill="#fff"/><path d="M8.2 6.2 H22.4" stroke="#fff" stroke-width="3.2" stroke-linecap="round"/><circle cx="2.8" cy="13" r="2.55" fill="#fff"/><path d="M8.2 13 H22.4" stroke="#fff" stroke-width="3.2" stroke-linecap="round"/><circle cx="2.8" cy="20" r="2.55" fill="#fff"/><path d="M8.2 20 H22.4" stroke="#fff" stroke-width="3.2" stroke-linecap="round"/></svg><svg style="position:absolute;left:647.5px;top:520px" width="26" height="26" viewBox="0 0 26 26"><path d="M8.2 6.2 H22.4" stroke="#fff" stroke-width="3.2" stroke-linecap="round"/><text x="-0.4" y="9.2" font-family="Liberation Sans, sans-serif" font-weight="bold" font-size="8.4" fill="#fff">1</text><path d="M8.2 13 H22.4" stroke="#fff" stroke-width="3.2" stroke-linecap="round"/><text x="-0.4" y="16.6" font-family="Liberation Sans, sans-serif" font-weight="bold" font-size="8.4" fill="#fff">2</text><path d="M8.2 20 H22.4" stroke="#fff" stroke-width="3.2" stroke-linecap="round"/><text x="-0.4" y="23.6" font-family="Liberation Sans, sans-serif" font-weight="bold" font-size="8.4" fill="#fff">3</text></svg><span style="position:absolute;left:687.2px;top:519.4px;font:normal 20px/24px 'Liberation Sans',sans-serif;color:#fff;transform:scaleX(1.12);transform-origin:0 0">A</span><div style="position:absolute;left:686px;top:541px;width:19px;height:4px;background:#000"></div><svg style="position:absolute;left:715px;top:520px" width="22" height="20" viewBox="0 0 22 20"><path d="M1.6 10.4 L9.4 2.6 L18.4 11.6 L10.6 19.2 Z" fill="#fff"/><path d="M6.4 5.2 C4.6 2.6 8.4 -0.4 10 2.2 L11.4 8.8" fill="none" stroke="#fff" stroke-width="1.4"/><path d="M14.6 8.6 C18 8.6 20.6 11 20 17.6 C19.6 18.6 17.6 18.6 17.6 16.8 C17.8 13.4 17.4 12 15.4 11 Z" fill="#fff"/></svg><div style="position:absolute;left:717px;top:541px;width:19px;height:4px;background:#fff"></div><svg style="position:absolute;left:751px;top:521.6px" width="24" height="21" viewBox="0 0 24 21"><rect x="0.6" y="0.6" width="22.8" height="19.4" fill="none" stroke="#fff" stroke-width="1.2"/><rect x="2.6" y="2.6" width="18.8" height="15.4" fill="none" stroke="#fff" stroke-width="1.6"/><path d="M3.4 13.4 L8.6 6.6 L12.4 11.6 L15.4 9.4 L20.6 14 V17.2 H3.4 Z" fill="#fff"/><circle cx="16.6" cy="6.2" r="1.6" fill="#fff"/></svg><svg style="position:absolute;left:780.4px;top:529.6px" width="10" height="7" viewBox="0 0 10 7"><path d="M0.8 0.8 H8.8 L4.8 5.2 Z" fill="#000" stroke="#fff" stroke-width="1"/></svg><svg style="position:absolute;left:795px;top:522px" width="22" height="20" viewBox="0 0 22 20"><rect x="0" y="0.2" width="22" height="19.6" rx="2.4" fill="#fff"/><rect x="2.1" y="3.2" width="4.9" height="3.1" fill="#0071e6"/><rect x="2.1" y="8.1" width="4.9" height="3.1" fill="#0071e6"/><rect x="2.1" y="13" width="4.9" height="3.1" fill="#0071e6"/><rect x="8.5" y="3.2" width="4.9" height="3.1" fill="#0071e6"/><rect x="8.5" y="8.1" width="4.9" height="3.1" fill="#0071e6"/><rect x="8.5" y="13" width="4.9" height="3.1" fill="#0071e6"/><rect x="14.9" y="3.2" width="4.9" height="3.1" fill="#0071e6"/><rect x="14.9" y="8.1" width="4.9" height="3.1" fill="#0071e6"/><rect x="14.9" y="13" width="4.9" height="3.1" fill="#0071e6"/></svg><svg style="position:absolute;left:841px;top:529.6px" width="4" height="7" viewBox="0 0 4 7"><path d="M0 0 L3.2 3.2 L0 6.4 Z" fill="#000"/></svg>
<div style="position:absolute;box-sizing:border-box;left:4px;top:551.6px;width:845px;height:112.4px;background:#fff;border:2px solid #0071e6"></div>
<div style="position:absolute;left:12px;top:559px;width:1px;height:16px;background:#000"></div>
<div class="bb" style="left:669px;top:674px;width:84px;height:31px;border-radius:3px 3px 0 0"></div>
<div class="bb" style="left:761px;top:674px;width:84px;height:31px;border-radius:3px 3px 0 0"></div>
<svg style="position:absolute;left:678.8px;top:679.8px" width="19" height="19" viewBox="0 0 19 19"><circle cx="9.5" cy="9.5" r="8.7" fill="none" stroke="#fff" stroke-width="1.1"/><circle cx="9.5" cy="9.5" r="6.6" fill="#fff"/><path d="M5.6 9.4 L8.4 12.4 L13.4 6.4" fill="none" stroke="#0071e6" stroke-width="2.7" stroke-linecap="round" stroke-linejoin="round"/></svg><svg style="position:absolute;left:771.8px;top:679.8px" width="19" height="19" viewBox="0 0 19 19"><circle cx="9.5" cy="9.5" r="8.7" fill="none" stroke="#fff" stroke-width="1.1"/><circle cx="9.5" cy="9.5" r="6.6" fill="#fff"/><path d="M6.7 6.7 L12.3 12.3 M12.3 6.7 L6.7 12.3" fill="none" stroke="#0071e6" stroke-width="2.3" stroke-linecap="round"/></svg>
<svg style="position:absolute;left:855px;top:134px" width="28" height="3" viewBox="0 0 28 3"><rect x="0" y="0" width="2" height="2" fill="#fff"/><path d="M3 0.8 V3 H1 Z" fill="#999"/><rect x="2" y="2" width="1" height="1" fill="#aaa"/><rect x="4" y="0" width="2" height="2" fill="#fff"/><path d="M7 0.8 V3 H5 Z" fill="#999"/><rect x="6" y="2" width="1" height="1" fill="#aaa"/><rect x="8" y="0" width="2" height="2" fill="#fff"/><path d="M11 0.8 V3 H9 Z" fill="#999"/><rect x="10" y="2" width="1" height="1" fill="#aaa"/><rect x="12" y="0" width="2" height="2" fill="#fff"/><path d="M15 0.8 V3 H13 Z" fill="#999"/><rect x="14" y="2" width="1" height="1" fill="#aaa"/><rect x="16" y="0" width="2" height="2" fill="#fff"/><path d="M19 0.8 V3 H17 Z" fill="#999"/><rect x="18" y="2" width="1" height="1" fill="#aaa"/><rect x="20" y="0" width="2" height="2" fill="#fff"/><path d="M23 0.8 V3 H21 Z" fill="#999"/><rect x="22" y="2" width="1" height="1" fill="#aaa"/><rect x="24" y="0" width="2" height="2" fill="#fff"/><path d="M27 0.8 V3 H25 Z" fill="#999"/><rect x="26" y="2" width="1" height="1" fill="#aaa"/></svg><div class="hs" style="top:234px"></div><div class="hs" style="top:361px"></div><div class="hs" style="top:428px"></div><div class="hs" style="top:495px"></div><div class="hs" style="top:592px"></div><div class="hs" style="top:659px"></div><svg style="position:absolute;left:857px;top:144px" width="24" height="24" viewBox="0 0 24 24"><rect x="1" y="1" width="22" height="22" rx="2.4" fill="none" stroke="#0870e6" stroke-width="2"/><path d="M1 1.6 H23 V5.4 H1 Z" fill="#0870e6"/><path d="M6 8.6 H19.4" stroke="#0870e6" stroke-width="3" stroke-linecap="round"/><rect x="4.8" y="12" width="1.8" height="1.6" fill="#0870e6"/><path d="M8.6 12.8 H19.6" stroke="#0870e6" stroke-width="1.7"/><rect x="4.8" y="14.8" width="1.8" height="1.6" fill="#0870e6"/><path d="M8.6 15.6 H19.6" stroke="#0870e6" stroke-width="1.7"/><rect x="4.8" y="17.6" width="1.8" height="1.6" fill="#0870e6"/><path d="M8.6 18.4 H19.6" stroke="#0870e6" stroke-width="1.7"/></svg><svg style="position:absolute;left:858px;top:176px" width="22" height="21" viewBox="0 0 22 21"><rect x="0" y="0.4" width="22" height="20" rx="0.8" fill="#0870e6"/><path d="M0.6 2.4 H21.4" stroke="#9cc4f3" stroke-width="0.8"/><rect x="1.4" y="4.4" width="2.9" height="2.6" fill="#fff"/><rect x="1.4" y="8.4" width="2.9" height="2.6" fill="#fff"/><rect x="1.4" y="12.4" width="2.9" height="2.6" fill="#fff"/><rect x="1.4" y="16.4" width="2.9" height="2.6" fill="#fff"/><rect x="9.6" y="4.4" width="2.9" height="2.6" fill="#fff"/><rect x="9.6" y="8.4" width="2.9" height="2.6" fill="#fff"/><rect x="9.6" y="12.4" width="2.9" height="2.6" fill="#fff"/><rect x="9.6" y="16.4" width="2.9" height="2.6" fill="#fff"/><rect x="14" y="4.4" width="2.9" height="2.6" fill="#fff"/><rect x="14" y="8.4" width="2.9" height="2.6" fill="#fff"/><rect x="14" y="12.4" width="2.9" height="2.6" fill="#fff"/><rect x="14" y="16.4" width="2.9" height="2.6" fill="#fff"/><rect x="18.2" y="4.4" width="2.9" height="2.6" fill="#fff"/><rect x="18.2" y="8.4" width="2.9" height="2.6" fill="#fff"/><rect x="18.2" y="12.4" width="2.9" height="2.6" fill="#fff"/><rect x="18.2" y="16.4" width="2.9" height="2.6" fill="#fff"/></svg><svg style="position:absolute;left:857px;top:204.3px" width="24" height="24" viewBox="0 0 24 24"><path d="M9.89 4.28 L11.19 0.63 L12.81 0.63 L14.11 4.28 L14.83 4.52 L18.03 2.33 L19.34 3.27 L18.24 7.00 L18.69 7.61 L22.57 7.72 L23.06 9.25 L19.99 11.62 L19.99 12.38 L23.06 14.75 L22.57 16.28 L18.69 16.39 L18.24 17.00 L19.34 20.73 L18.03 21.67 L14.83 19.48 L14.11 19.72 L12.81 23.37 L11.19 23.37 L9.89 19.72 L9.17 19.48 L5.97 21.67 L4.66 20.73 L5.76 17.00 L5.31 16.39 L1.43 16.28 L0.94 14.75 L4.01 12.38 L4.01 11.62 L0.94 9.25 L1.43 7.72 L5.31 7.61 L5.76 7.00 L4.66 3.27 L5.97 2.33 L9.17 4.52 Z" fill="#0870e6" stroke="#0870e6" stroke-width="1.2" stroke-linejoin="round"/><circle cx="12" cy="12" r="4.3" fill="#ebebeb"/></svg><svg style="position:absolute;left:857px;top:243px" width="24" height="22" viewBox="0 0 24 22"><rect x="0.9" y="5.7" width="4.6" height="8.6" fill="none" stroke="#0870e6" stroke-width="1.7"/><path d="M8.8 12 V5.7 H14.2 V1.2 L19.2 6.2" fill="none" stroke="#0870e6" stroke-width="1.7" stroke-linejoin="miter"/><path d="M6.2 15.4 L9.2 12.4 L12.6 16.2 C15.6 11.4 19.4 7.6 23.4 4.8 C22.6 7.2 22.8 9.4 23.4 10.6 C19.4 13.6 15.8 17.4 12.8 21.8 Z" fill="#0870e6"/></svg><svg style="position:absolute;left:857px;top:271px" width="24" height="24" viewBox="0 0 24 24"><path d="M2.6 0.4 H19.6 L23.6 4.4 V21.4 Q23.6 23.6 21.4 23.6 H2.6 Q0.4 23.6 0.4 21.4 V2.6 Q0.4 0.4 2.6 0.4 Z" fill="#0870e6"/><rect x="5" y="1.8" width="12.2" height="7.2" fill="#ebebeb"/><rect x="13.8" y="2.4" width="2.4" height="5.6" fill="#0870e6"/><rect x="3.4" y="12.8" width="18.4" height="9" fill="#ebebeb"/><path d="M7.4 17.6 L10 15.8 L13 19.4 C16 14.4 19.4 10.8 23 8.6 C22.4 10.6 22.8 12.4 23.4 13.2 C19.6 16.4 16.2 20 13.4 24 Z" fill="#0870e6" stroke="#0a2a55" stroke-width="0.5"/></svg><svg style="position:absolute;left:857px;top:301px" width="24" height="24" viewBox="0 0 24 24"><circle cx="12" cy="12" r="11.3" fill="none" stroke="#0870e6" stroke-width="1.2"/><circle cx="12" cy="12" r="9.2" fill="#0870e6"/><path d="M7.6 7 L15.6 16 M15.6 7 L7.6 16" stroke="#fff" stroke-width="2.4" stroke-linecap="round"/><path d="M6 16.6 L8.8 14.6 L12 18.4 C15 13.4 18.6 9.6 22.6 7.2 C22 9.4 22.4 11 23 12 C19.2 15 15.6 18.8 12.6 23 Z" fill="#0870e6" stroke="#0a2a55" stroke-width="0.55"/></svg><svg style="position:absolute;left:857px;top:331px" width="24" height="24" viewBox="0 0 24 24"><g transform="translate(-0.4 1.6) rotate(45 12 12) scale(0.95)"><rect x="7" y="-2.4" width="10" height="9.4" fill="#0870e6"/><path d="M9 -0.6 H15 V1.4 H12.6 V2.8 H15 V5 H9 Z" fill="#fff"/><rect x="6.2" y="8.2" width="11.6" height="2.4" fill="#0870e6"/><path d="M6.2 11.6 H17.8 C17.8 15 14.4 15 14.2 18 L14.6 24.6 C14.6 28 9.4 28 9.4 24.6 L9.8 18 C9.6 15 6.2 15 6.2 11.6 Z" fill="#0870e6"/><circle cx="12" cy="24.6" r="1" fill="#ebebeb"/></g></svg><svg style="position:absolute;left:857px;top:368.6px" width="24" height="23" viewBox="0 0 24 23"><rect x="0" y="0" width="16.6" height="17.2" fill="#0870e6"/><rect x="7.4" y="5" width="16.6" height="17.2" fill="#0870e6"/><rect x="2" y="2" width="5" height="2.8" fill="#fff"/><path d="M2 3.4 h5" stroke="#cfe0f5" stroke-width="0.5"/><rect x="2" y="7" width="5" height="2.8" fill="#fff"/><path d="M2 8.4 h5" stroke="#cfe0f5" stroke-width="0.5"/><rect x="2" y="12" width="5" height="2.8" fill="#fff"/><path d="M2 13.4 h5" stroke="#cfe0f5" stroke-width="0.5"/><rect x="9.2" y="2" width="5" height="2.8" fill="#fff"/><path d="M9.2 3.4 h5" stroke="#cfe0f5" stroke-width="0.5"/><rect x="9.4" y="17" width="5" height="2.8" fill="#fff"/><path d="M9.4 18.4 h5" stroke="#cfe0f5" stroke-width="0.5"/><rect x="16.6" y="7" width="5" height="2.8" fill="#fff"/><path d="M16.6 8.4 h5" stroke="#cfe0f5" stroke-width="0.5"/><rect x="16.6" y="12" width="5" height="2.8" fill="#fff"/><path d="M16.6 13.4 h5" stroke="#cfe0f5" stroke-width="0.5"/><rect x="16.6" y="17" width="5" height="2.8" fill="#fff"/><path d="M16.6 18.4 h5" stroke="#cfe0f5" stroke-width="0.5"/><path d="M9.6 11 H14" stroke="#8ab8f0" stroke-width="1.2"/></svg><svg style="position:absolute;left:857px;top:398px" width="24" height="24" viewBox="0 0 24 24"><rect width="24" height="24" fill="#0870e6"/><rect x="2.2" y="2.2" width="2.6" height="2.4" fill="#fff"/><rect x="2.2" y="7.4" width="2.6" height="2.4" fill="#fff"/><rect x="7.7" y="2.2" width="2.6" height="2.4" fill="#fff"/><rect x="7.7" y="7.4" width="2.6" height="2.4" fill="#fff"/><rect x="13.2" y="2.2" width="2.6" height="2.4" fill="#fff"/><rect x="13.2" y="7.4" width="2.6" height="2.4" fill="#fff"/><rect x="18.7" y="2.2" width="2.6" height="2.4" fill="#fff"/><rect x="18.7" y="7.4" width="2.6" height="2.4" fill="#fff"/><rect x="2.2" y="19" width="2.6" height="2.4" fill="#fff"/><rect x="18.7" y="19" width="2.6" height="2.4" fill="#fff"/><path d="M1.4 15.6 C6 8.4 18 8.4 22.6 15.6 C18 22 6 22 1.4 15.6 Z" fill="#0870e6" stroke="#fff" stroke-width="1.5"/><path d="M6.4 13 C6.4 21 17.6 21 17.6 13" fill="none" stroke="#fff" stroke-width="1.4"/><circle cx="12" cy="14.2" r="3.2" fill="#0870e6"/></svg><svg style="position:absolute;left:857px;top:434px" width="24" height="25" viewBox="0 0 24 25"><path d="M12 0.8 C8 0.8 6.4 4 6.8 8 C7 10.6 8.6 12.6 9.8 13.4 C9.8 14.6 9.4 15.2 8 15.8 C4 17 1.4 18.4 1.4 21 C1.4 23.6 6 24.8 12 24.8 C18 24.8 22.6 23.6 22.6 21 C22.6 18.4 20 17 16 15.8 C14.6 15.2 14.2 14.6 14.2 13.4 C15.4 12.6 17 10.6 17.2 8 C17.6 4 16 0.8 12 0.8 Z" fill="#0870e6"/></svg><svg style="position:absolute;left:857px;top:465px" width="24" height="24" viewBox="0 0 24 24"><path d="M12 0.2 C9 2.6 5.6 4.2 1.8 4.8 C1.4 13.6 5 20 12 23.8 C19 20 22.6 13.6 22.2 4.8 C18.4 4.2 15 2.6 12 0.2 Z" fill="#0870e6"/><ellipse cx="12" cy="8.2" rx="2.5" ry="3" fill="#fff"/><path d="M10.4 10.6 H13.6 V12 C16.4 12.6 17.2 13.6 17.2 14.6 C17.2 15.6 6.8 15.6 6.8 14.6 C6.8 13.6 7.6 12.6 10.4 12 Z" fill="#fff"/></svg><svg style="position:absolute;left:857px;top:501.6px" width="24" height="25" viewBox="0 0 24 25"><g fill="#0870e6"><rect x="4.75" y="0.65" width="4.30" height="4.30" transform="rotate(23 6.90 2.80)"/><rect x="2.65" y="5.15" width="4.30" height="4.30" transform="rotate(23 4.80 7.30)"/><rect x="6.90" y="6.95" width="4.30" height="4.30" transform="rotate(23 9.05 9.10)"/><rect x="0.55" y="9.65" width="4.30" height="4.30" transform="rotate(23 2.70 11.80)"/><rect x="4.80" y="11.45" width="4.30" height="4.30" transform="rotate(23 6.95 13.60)"/><rect x="12.60" y="1.20" width="4.00" height="4.00" transform="rotate(45 14.60 3.20)"/><rect x="18.90" y="3.30" width="4.00" height="4.00" transform="rotate(30 20.90 5.30)"/><rect x="15.25" y="8.15" width="3.70" height="3.70" transform="rotate(8 17.10 10.00)"/><path d="M3.2 17.426 h4.55 v-2.726 l5.55 4.7 l-5.55 4.7 v-2.726 h-4.55 q-1 0 -1 -1 v-1.948 q0 -1 1 -1 z"/><path d="M13.8 13.584 h4.55 v-2.784 l5.55 4.8 l-5.55 4.8 v-2.784 h-4.55 q-1 0 -1 -1 v-2.032 q0 -1 1 -1 z"/></g></svg><svg style="position:absolute;left:857px;top:531.9px" width="24" height="25" viewBox="0 0 24 25"><g fill="#0870e6"><rect x="4.75" y="0.65" width="4.30" height="4.30" transform="rotate(23 6.90 2.80)"/><rect x="2.65" y="5.15" width="4.30" height="4.30" transform="rotate(23 4.80 7.30)"/><rect x="6.90" y="6.95" width="4.30" height="4.30" transform="rotate(23 9.05 9.10)"/><rect x="0.55" y="9.65" width="4.30" height="4.30" transform="rotate(23 2.70 11.80)"/><rect x="4.80" y="11.45" width="4.30" height="4.30" transform="rotate(23 6.95 13.60)"/><rect x="9.05" y="13.25" width="4.30" height="4.30" transform="rotate(23 11.20 15.40)"/><rect x="12.60" y="1.20" width="4.00" height="4.00" transform="rotate(45 14.60 3.20)"/><rect x="18.90" y="3.30" width="4.00" height="4.00" transform="rotate(30 20.90 5.30)"/><rect x="15.25" y="8.15" width="3.70" height="3.70" transform="rotate(8 17.10 10.00)"/><path d="M13.8 16.942 h4.55 v-2.842 l5.55 4.9 l-5.55 4.9 v-2.842 h-4.55 q-1 0 -1 -1 v-2.116 q0 -1 1 -1 z"/></g></svg><svg style="position:absolute;left:857px;top:562px" width="24" height="25" viewBox="0 0 24 25"><g fill="#0870e6"><rect x="4.75" y="0.65" width="4.30" height="4.30" transform="rotate(23 6.90 2.80)"/><rect x="2.65" y="5.15" width="4.30" height="4.30" transform="rotate(23 4.80 7.30)"/><rect x="6.90" y="6.95" width="4.30" height="4.30" transform="rotate(23 9.05 9.10)"/><rect x="0.55" y="9.65" width="4.30" height="4.30" transform="rotate(23 2.70 11.80)"/><rect x="4.80" y="11.45" width="4.30" height="4.30" transform="rotate(23 6.95 13.60)"/><rect x="9.05" y="13.25" width="4.30" height="4.30" transform="rotate(23 11.20 15.40)"/><rect x="12.60" y="1.20" width="4.00" height="4.00" transform="rotate(45 14.60 3.20)"/><rect x="18.90" y="3.30" width="4.00" height="4.00" transform="rotate(30 20.90 5.30)"/><rect x="15.25" y="8.15" width="3.70" height="3.70" transform="rotate(8 17.10 10.00)"/><path d="M13.8 16.942 h4.55 v-2.842 l5.55 4.9 l-5.55 4.9 v-2.842 h-4.55 q-1 0 -1 -1 v-2.116 q0 -1 1 -1 z" transform="translate(36.7 0) scale(-1 1)"/></g></svg><svg style="position:absolute;left:860px;top:600.4px" width="20" height="22" viewBox="0 0 20 22"><path d="M2.8 1 H10.6 L16.6 7 V18 Q16.6 19.6 15 19.6 H2.8 Q1 19.6 1 18 V2.8 Q1 1 2.8 1 Z M10.4 1.2 V7.2 H16.4" fill="none" stroke="#0870e6" stroke-width="1.9" stroke-linejoin="round"/><path d="M4.4 10.6 H10 M4.4 14.2 H8.6" stroke="#0870e6" stroke-width="1.7"/><circle cx="15.4" cy="17" r="5.3" fill="#0870e6" stroke="#ebebeb" stroke-width="1.2"/><path d="M12.8 17 H18 M15.4 14.4 V19.6" stroke="#fff" stroke-width="1.7"/></svg><svg style="position:absolute;left:860px;top:630.6px" width="20" height="22" viewBox="0 0 20 22"><path d="M2.8 1 H10.6 L16.6 7 V18 Q16.6 19.6 15 19.6 H2.8 Q1 19.6 1 18 V2.8 Q1 1 2.8 1 Z M10.4 1.2 V7.2 H16.4" fill="none" stroke="#0870e6" stroke-width="1.9" stroke-linejoin="round"/><path d="M4.4 11.4 H13.2 M4.4 15 H13.2" stroke="#0870e6" stroke-width="1.7"/></svg><svg style="position:absolute;left:866px;top:696.8px" width="7" height="4" viewBox="0 0 7 4"><path d="M0 0 H6.4 L3.2 3.4 Z" fill="#000"/></svg>
<span style="position:absolute;white-space:pre;left:30px;top:5.84px;line-height:20px;height:20px;font-size:12px;color:#000;font-family:'Liberation Sans',sans-serif;letter-spacing:-0.569px;">SIMAX</span>
<span style="position:absolute;white-space:pre;left:68px;top:5.84px;line-height:20px;height:20px;font-size:12px;color:#000;font-family:'Liberation Sans',sans-serif;letter-spacing:0.104px;">0/1</span>
<span style="position:absolute;white-space:pre;left:88.2px;top:5.84px;line-height:20px;height:20px;font-size:12px;color:#000;font-family:'Liberation Sans',sans-serif;letter-spacing:0.01px;">[Localhost</span>
<span style="position:absolute;white-space:pre;left:147.2px;top:5.84px;line-height:20px;height:20px;font-size:12px;color:#000;font-family:'Liberation Sans',sans-serif;">-</span>
<span style="position:absolute;white-space:pre;left:154.5px;top:5.84px;line-height:20px;height:20px;font-size:12px;color:#000;font-family:'Liberation Sans',sans-serif;letter-spacing:-0.359px;">simaxvu</span>
<span style="position:absolute;white-space:pre;left:200.8px;top:5.84px;line-height:20px;height:20px;font-size:12px;color:#000;font-family:'Liberation Sans',sans-serif;">-</span>
<span style="position:absolute;white-space:pre;left:208.8px;top:5.84px;line-height:20px;height:20px;font-size:12px;color:#000;font-family:'Liberation Sans',sans-serif;letter-spacing:-0.306px;">Superviseur]</span>
<span style="position:absolute;white-space:pre;left:276px;top:5.84px;line-height:20px;height:20px;font-size:12px;color:#000;font-family:'Liberation Sans',sans-serif;letter-spacing:-0.627px;">1905.01</span>
<span style="position:absolute;white-space:pre;left:319.3px;top:5.84px;line-height:20px;height:20px;font-size:12px;color:#000;font-family:'Liberation Sans',sans-serif;">-</span>
<span style="position:absolute;white-space:pre;left:326px;top:5.84px;line-height:20px;height:20px;font-size:12px;color:#000;font-family:'Liberation Sans',sans-serif;letter-spacing:-0.427px;">Version</span>
<span style="position:absolute;white-space:pre;left:367.5px;top:5.84px;line-height:20px;height:20px;font-size:12px;color:#000;font-family:'Liberation Sans',sans-serif;letter-spacing:-0.072px;">interne</span>
<span style="position:absolute;white-space:pre;left:9px;top:35.84px;line-height:20px;height:20px;font-size:12px;color:#000;font-family:'Liberation Sans',sans-serif;letter-spacing:-0.386px;">Général</span>
<span style="position:absolute;white-space:pre;left:65px;top:35.84px;line-height:20px;height:20px;font-size:12px;color:#000;font-family:'Liberation Sans',sans-serif;letter-spacing:-0.252px;">Fichiers</span>
<span style="position:absolute;white-space:pre;left:121px;top:35.84px;line-height:20px;height:20px;font-size:12px;color:#000;font-family:'Liberation Sans',sans-serif;letter-spacing:-0.034px;">Prospection</span>
<span style="position:absolute;white-space:pre;left:200px;top:35.84px;line-height:20px;height:20px;font-size:12px;color:#000;font-family:'Liberation Sans',sans-serif;letter-spacing:-0.472px;">Vente</span>
<span style="position:absolute;white-space:pre;left:245px;top:35.84px;line-height:20px;height:20px;font-size:12px;color:#000;font-family:'Liberation Sans',sans-serif;letter-spacing:-0.615px;">Caisse</span>
<span style="position:absolute;white-space:pre;left:294px;top:35.84px;line-height:20px;height:20px;font-size:12px;color:#000;font-family:'Liberation Sans',sans-serif;letter-spacing:0.163px;">Production</span>
<span style="position:absolute;white-space:pre;left:369px;top:35.84px;line-height:20px;height:20px;font-size:12px;color:#000;font-family:'Liberation Sans',sans-serif;letter-spacing:-0.06px;">Projet</span>
<span style="position:absolute;white-space:pre;left:416px;top:35.84px;line-height:20px;height:20px;font-size:12px;color:#000;font-family:'Liberation Sans',sans-serif;letter-spacing:0.028px;">Logistique</span>
<span style="position:absolute;white-space:pre;left:487px;top:35.84px;line-height:20px;height:20px;font-size:12px;color:#000;font-family:'Liberation Sans',sans-serif;letter-spacing:-0.203px;">Stock</span>
<span style="position:absolute;white-space:pre;left:532px;top:35.84px;line-height:20px;height:20px;font-size:12px;color:#000;font-family:'Liberation Sans',sans-serif;letter-spacing:0.062px;">Achat</span>
<span style="position:absolute;white-space:pre;left:579px;top:35.84px;line-height:20px;height:20px;font-size:12px;color:#000;font-family:'Liberation Sans',sans-serif;letter-spacing:-0.003px;">Facturation</span>
<span style="position:absolute;white-space:pre;left:655px;top:35.84px;line-height:20px;height:20px;font-size:12px;color:#000;font-family:'Liberation Sans',sans-serif;letter-spacing:-0.369px;">Trésorerie</span>
<span style="position:absolute;white-space:pre;left:88px;top:104.02px;line-height:20px;height:20px;font-size:11.5px;color:#000;font-family:'Liberation Sans',sans-serif;letter-spacing:-0.031px;">R: 0/1</span>
<span style="position:absolute;white-space:pre;left:230px;top:104.19px;line-height:20px;height:20px;font-size:11px;color:#000;font-family:'Liberation Sans',sans-serif;letter-spacing:-0.208px;">Actions en cours</span>
<span style="position:absolute;white-space:pre;left:325px;top:104.19px;line-height:20px;height:20px;font-size:11px;color:#7a7a7a;font-family:'Liberation Sans',sans-serif;letter-spacing:-0.065px;">Exécuter une action</span>
<span style="position:absolute;white-space:pre;left:834.2px;top:104.19px;line-height:20px;height:20px;font-size:11px;color:#fff;font-family:'Liberation Sans',sans-serif;letter-spacing:-0.115px;">Exécuter</span>
<span style="position:absolute;white-space:pre;left:212.6px;top:103.84px;line-height:20px;height:20px;font-size:12px;color:#fff;font-family:'Liberation Sans',sans-serif;">2</span>
<span style="position:absolute;white-space:pre;left:39.1px;top:149.46px;line-height:20px;height:20px;font-size:16px;color:#fff;font-family:'Liberation Sans',sans-serif;letter-spacing:-0.35px;">Nouveau</span>
<span style="position:absolute;white-space:pre;left:106.2px;top:149.46px;line-height:20px;height:20px;font-size:16px;color:#fff;font-family:'Liberation Sans',sans-serif;letter-spacing:-0.56px;">message</span>
<span style="position:absolute;white-space:pre;left:173.6px;top:149.46px;line-height:20px;height:20px;font-size:16px;color:#fff;font-family:'Liberation Sans',sans-serif;">:</span>
<span style="position:absolute;white-space:pre;left:183.2px;top:149.46px;line-height:20px;height:20px;font-size:16px;color:#fff;font-family:'Liberation Sans',sans-serif;letter-spacing:0.615px;">Invitation</span>
<span style="position:absolute;white-space:pre;left:259.3px;top:149.46px;line-height:20px;height:20px;font-size:16px;color:#fff;font-family:'Liberation Sans',sans-serif;letter-spacing:-1.27px;">salon</span>
<span style="position:absolute;white-space:pre;left:3.4px;top:197.19px;line-height:20px;height:20px;font-size:11px;color:#000;font-family:'Liberation Sans',sans-serif;letter-spacing:-0.227px;">Pour :</span>
<span style="position:absolute;white-space:pre;left:3.4px;top:224.19px;line-height:20px;height:20px;font-size:11px;color:#000;font-family:'Liberation Sans',sans-serif;letter-spacing:-0.391px;">Cc :</span>
<span style="position:absolute;white-space:pre;left:3.4px;top:251.19px;line-height:20px;height:20px;font-size:11px;color:#000;font-family:'Liberation Sans',sans-serif;letter-spacing:-0.2px;">Cci :</span>
<span style="position:absolute;white-space:pre;left:3.4px;top:278.19px;line-height:20px;height:20px;font-size:11px;color:#000;font-family:'Liberation Sans',sans-serif;letter-spacing:-0.027px;">Sujet :</span>
<span style="position:absolute;white-space:pre;left:42.5px;top:197.19px;line-height:20px;height:20px;font-size:11px;color:#000;font-family:'Liberation Sans',sans-serif;letter-spacing:-0.115px;">"AFEU Pierre 3" &lt;afeu@pierre.fr&gt;,Bédard Eric 000003,Bibeau Julie</span>
<span style="position:absolute;white-space:pre;left:42.5px;top:278.19px;line-height:20px;height:20px;font-size:11px;color:#000;font-family:'Liberation Sans',sans-serif;letter-spacing:0.038px;">Invitation salon</span>
<span style="position:absolute;white-space:pre;left:62.5px;top:305.19px;line-height:20px;height:20px;font-size:11px;color:#fff;font-family:'Liberation Sans',sans-serif;letter-spacing:0.018px;">Ajouter une pièce-jointe</span>
<span style="position:absolute;white-space:pre;left:213px;top:305.19px;line-height:20px;height:20px;font-size:11px;color:#fff;font-family:'Liberation Sans',sans-serif;letter-spacing:-0.087px;">Ajouter presse-papier en PJ</span>
<span style="position:absolute;white-space:pre;left:7.5px;top:333.19px;line-height:20px;height:20px;font-size:11px;color:#000;font-family:'Liberation Sans',sans-serif;letter-spacing:0.167px;">Options &gt;&gt;</span>
<span style="position:absolute;white-space:pre;left:73px;top:333.19px;line-height:20px;height:20px;font-size:11px;color:#000;font-family:'Liberation Sans',sans-serif;letter-spacing:-0.14px;">Envoyer un EMail séparé par destinataire (Mailing)</span>
<span style="position:absolute;white-space:pre;left:3.4px;top:359.19px;line-height:20px;height:20px;font-size:11px;color:#000;font-family:'Liberation Sans',sans-serif;letter-spacing:-0.03px;">Adresse de retour :</span>
<span style="position:absolute;white-space:pre;left:3.4px;top:386.19px;line-height:20px;height:20px;font-size:11px;color:#000;font-family:'Liberation Sans',sans-serif;letter-spacing:-0.16px;">Demander un accusé de réception :</span>
<span style="position:absolute;white-space:pre;left:3.4px;top:413.19px;line-height:20px;height:20px;font-size:11px;color:#000;font-family:'Liberation Sans',sans-serif;letter-spacing:-0.111px;">Demander une confirmation de lecture :</span>
<span style="position:absolute;white-space:pre;left:3.4px;top:440.19px;line-height:20px;height:20px;font-size:11px;color:#000;font-family:'Liberation Sans',sans-serif;letter-spacing:-0.121px;">Demander une confirmation à la validation :</span>
<span style="position:absolute;white-space:pre;left:3.4px;top:467.19px;line-height:20px;height:20px;font-size:11px;color:#000;font-family:'Liberation Sans',sans-serif;letter-spacing:-0.136px;">Importance du message :</span>
<span style="position:absolute;white-space:pre;left:3.4px;top:492.19px;line-height:20px;height:20px;font-size:11px;color:#000;font-family:'Liberation Sans',sans-serif;letter-spacing:-0.137px;">Envoyer un EMail séparé par destinataire (Mailing) :</span>
<span style="position:absolute;white-space:pre;left:256px;top:386.19px;line-height:20px;height:20px;font-size:11px;color:#000;font-family:'Liberation Sans',sans-serif;letter-spacing:-0.441px;">Aucun</span>
<span style="position:absolute;white-space:pre;left:256px;top:413.19px;line-height:20px;height:20px;font-size:11px;color:#000;font-family:'Liberation Sans',sans-serif;letter-spacing:-0.441px;">Aucun</span>
<span style="position:absolute;white-space:pre;left:256px;top:440.19px;line-height:20px;height:20px;font-size:11px;color:#000;font-family:'Liberation Sans',sans-serif;letter-spacing:-0.441px;">Aucun</span>
<span style="position:absolute;white-space:pre;left:255.5px;top:467.19px;line-height:20px;height:20px;font-size:11px;color:#000;font-family:'Liberation Sans',sans-serif;letter-spacing:-0.326px;">Normal</span>
<span style="position:absolute;white-space:pre;left:10px;top:524.19px;line-height:20px;height:20px;font-size:11px;color:#000;font-family:'Liberation Sans',sans-serif;letter-spacing:-0.56px;">Tahoma</span>
<span style="position:absolute;white-space:pre;left:204px;top:524.19px;line-height:20px;height:20px;font-size:11px;color:#000;font-family:'Liberation Sans',sans-serif;letter-spacing:-0.875px;">10</span>
<span style="position:absolute;white-space:pre;left:703px;top:681.19px;line-height:20px;height:20px;font-size:11px;color:#fff;font-family:'Liberation Sans',sans-serif;letter-spacing:-0.194px;">Envoyer</span>
<span style="position:absolute;white-space:pre;left:796px;top:681.19px;line-height:20px;height:20px;font-size:11px;color:#fff;font-family:'Liberation Sans',sans-serif;letter-spacing:-0.275px;">Annuler</span>
</body></html>
